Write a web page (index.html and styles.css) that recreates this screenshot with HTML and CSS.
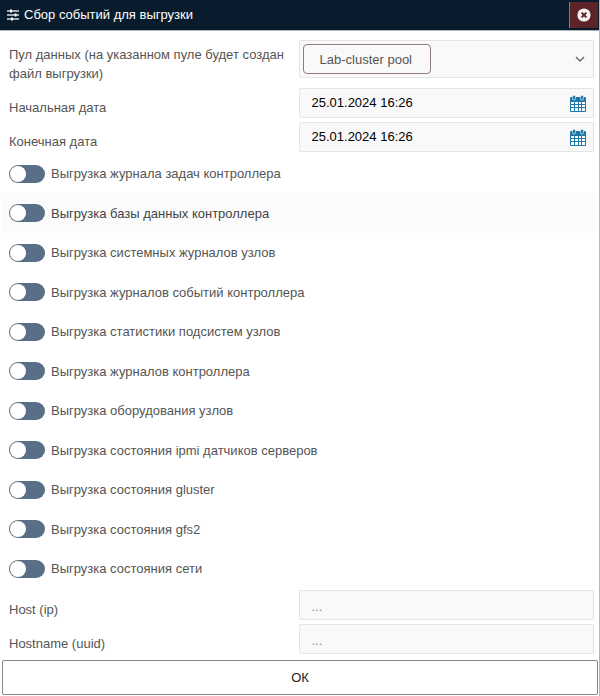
FILE: index.html
```html
<!DOCTYPE html>
<html lang="ru">
<head>
    <meta charset="UTF-8">
    <meta name="viewport" content="width=device-width, initial-scale=1.0">
    <title>Сбор событий для выгрузки</title>
    <link rel="stylesheet" href="styles.css">
</head>
<body>
    <svg class="sprite" aria-hidden="true">
        <symbol id="calendar" viewBox="0 0 16 17">
            <rect x="0" y="2" width="16" height="15" rx="1" fill="#1d78a8"/>
            <path fill="#fff" d="M1 7h3v2H1zM5 7h3v2H5zM9 7h2v2H9zM12 7h3v2h-3zM1 10h3v2H1zM5 10h3v2H5zM9 10h2v2H9zM12 10h3v2h-3zM1 13h3v3H1zM5 13h3v3H5zM9 13h2v3H9zM12 13h3v3h-3z"/>
            <rect x="2.500" y="0.300" width="3" height="4.700" rx="1.500" fill="#1d78a8" stroke="#cfe3ee" stroke-width="0.800"/>
            <rect x="10.500" y="0.300" width="3" height="4.700" rx="1.500" fill="#1d78a8" stroke="#cfe3ee" stroke-width="0.800"/>
        </symbol>
    </svg>

    <form class="dialog">
        <header class="dialog-header">
            <svg class="icon-sliders" viewBox="0 0 12 12" aria-hidden="true">
                <path fill="#d5d9dd" d="M0 1.300h12v1.400H0zM0 5.300h12v1.400H0zM0 9.300h12v1.400H0z"/>
                <path fill="#fff" d="M3 0.500h2v3h-2zM7.500 4.500h2v3h-2zM4 8.500h2v3h-2z"/>
            </svg>
            <h1>Сбор событий для выгрузки</h1>
            <button type="button" class="close" aria-label="Закрыть">
                <svg viewBox="0 0 14 14" aria-hidden="true">
                    <circle cx="7" cy="7" r="6.600" fill="#f4f0f0"/>
                    <path d="M4.600 4.600l4.800 4.800M9.400 4.600l-4.800 4.800" stroke="#5c2328" stroke-width="2"/>
                </svg>
            </button>
        </header>

        <div class="row row-pool">
            <label for="pool">Пул данных (на указанном пуле будет создан файл выгрузки)</label>
            <div class="field field-select">
                <select id="pool">
                    <option>Lab-cluster pool</option>
                </select>
                <svg class="chevron" viewBox="0 0 10 6" aria-hidden="true">
                    <path d="M1 1l4 4 4-4" fill="none" stroke="#666" stroke-width="1.400"/>
                </svg>
            </div>
        </div>

        <div class="row">
            <label for="dateStart">Начальная дата</label>
            <div class="field">
                <input type="text" id="dateStart" value="25.01.2024 16:26">
                <svg class="calendar" aria-hidden="true"><use href="#calendar"/></svg>
            </div>
        </div>
        <div class="row">
            <label for="dateEnd">Конечная дата</label>
            <div class="field">
                <input type="text" id="dateEnd" value="25.01.2024 16:26">
                <svg class="calendar" aria-hidden="true"><use href="#calendar"/></svg>
            </div>
        </div>

        <div class="toggles">
            <label class="toggle"><input type="checkbox">Выгрузка журнала задач контроллера</label>
            <label class="toggle active"><input type="checkbox">Выгрузка базы данных контроллера</label>
            <label class="toggle"><input type="checkbox">Выгрузка системных журналов узлов</label>
            <label class="toggle"><input type="checkbox">Выгрузка журналов событий контроллера</label>
            <label class="toggle"><input type="checkbox">Выгрузка статистики подсистем узлов</label>
            <label class="toggle"><input type="checkbox">Выгрузка журналов контроллера</label>
            <label class="toggle"><input type="checkbox">Выгрузка оборудования узлов</label>
            <label class="toggle"><input type="checkbox">Выгрузка состояния ipmi датчиков серверов</label>
            <label class="toggle"><input type="checkbox">Выгрузка состояния gluster</label>
            <label class="toggle"><input type="checkbox">Выгрузка состояния gfs2</label>
            <label class="toggle"><input type="checkbox">Выгрузка состояния сети</label>
        </div>

        <div class="row">
            <label for="host">Host (ip)</label>
            <div class="field">
                <input type="text" id="host" placeholder="...">
            </div>
        </div>
        <div class="row">
            <label for="hostname">Hostname (uuid)</label>
            <div class="field">
                <input type="text" id="hostname" placeholder="...">
            </div>
        </div>

        <button type="submit" class="submit">ОК</button>
    </form>
</body>
</html>
```
FILE: styles.css
```css
:root {
    --header-color: #081c2d;
    --text-color: #555;
    --field-color: #f9f9f9;
    --border-color: #e4e4e4;
    --toggle-color: #596e87;
}

* {
    box-sizing: border-box;
    margin: 0;
    padding: 0;
}

body {
    font-family: "Liberation Sans", Arial, sans-serif;
    font-size: 13px;
    line-height: 19px;
    color: var(--text-color);
    background: #fff;
}

input,
select,
button {
    font: inherit;
}

.sprite {
    display: none;
}

.dialog {
    border-right: 1px solid #b5b8bb;
    padding-bottom: 1px;
}

/* header */
.dialog-header {
    display: flex;
    align-items: center;
    height: 31px;
    padding: 0 1px 0 7px;
    background: var(--header-color);
    border-bottom: 1px solid #adb3b9;
    margin-bottom: 9px;
}

.icon-sliders {
    width: 12px;
    height: 12px;
    margin-right: 5px;
}

.dialog-header h1 {
    flex: 1;
    padding-bottom: 2px;
    font-size: 13px;
    font-weight: normal;
    color: #fff;
}

.close {
    display: flex;
    align-items: center;
    justify-content: center;
    width: 29px;
    height: 26px;
    background: #5c2328;
    border: none;
    border-left: 1px solid #95777c;
    cursor: pointer;
}

.close svg {
    width: 14px;
    height: 14px;
}

/* form rows */
.row {
    display: grid;
    grid-template-columns: 1fr 1fr;
    padding: 0 5px 0 9px;
    margin-bottom: 4px;
}

.row > label {
    padding: 10px 8px 0 0;
}

.row-pool {
    margin-bottom: 10px;
}

.row-pool > label {
    height: 38px;
    padding-top: 5px;
}

.field {
    display: flex;
    align-items: center;
    height: 30px;
    margin-left: -3px;
    background: var(--field-color);
    border: 1px solid var(--border-color);
    border-radius: 2px;
}

.field input {
    flex: 1;
    min-width: 0;
    height: 28px;
    padding: 0 12px 2px;
    color: #000;
    background: none;
    border: none;
}

.field input[placeholder] {
    padding: 2px 12px 0;
}

.field input::placeholder {
    color: #888;
}

.calendar {
    width: 16px;
    height: 17px;
    margin-right: 7px;
}

.field-select {
    justify-content: space-between;
    height: 38px;
    padding: 0 8px 0 3px;
}

.field-select select {
    appearance: none;
    height: 30px;
    width: 128px;
    padding: 0 16px;
    color: var(--text-color);
    background: none;
    border: 1px solid #8f7c80;
    border-radius: 4px;
}

.chevron {
    width: 10px;
    height: 6px;
}

/* switches */
.toggles {
    margin: -2px 0 2px;
}

.toggle {
    display: flex;
    align-items: center;
    height: 39px;
    padding-left: 8px;
    margin: 0 2px 0 1px;
}

.toggle:nth-child(even) {
    height: 40px;
}

.toggle.active {
    color: #444;
    background: #fbfbfb;
}

.toggle input {
    appearance: none;
    flex: none;
    width: 36px;
    height: 18px;
    padding: 1px;
    margin-right: 6px;
    background: var(--toggle-color);
    border-radius: 9px;
    cursor: pointer;
}

.toggle input::before {
    content: "";
    display: block;
    width: 16px;
    height: 16px;
    background: #fff;
    border-radius: 50%;
}

.toggle input:checked::before {
    margin-left: auto;
}

.submit {
    display: block;
    width: calc(100% - 3px);
    height: 35px;
    margin: 6px 1px 0 2px;
    color: #222;
    background: #fff;
    border: 1px solid #888;
    border-radius: 2px;
    cursor: pointer;
}
```
